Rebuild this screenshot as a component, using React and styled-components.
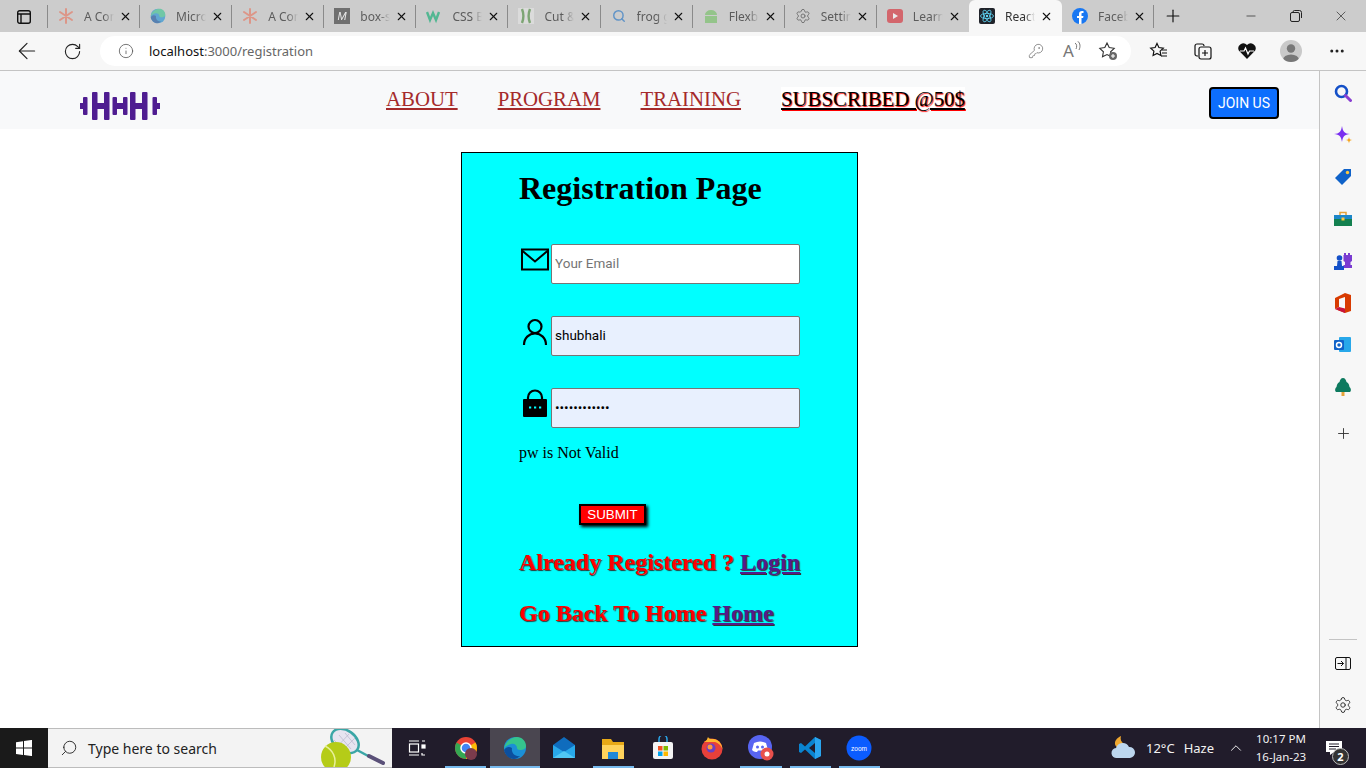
import styled, { createGlobalStyle } from "styled-components";
import { ArrowLeft, RotateCw, Info, KeyRound, Plus, X, Minus, ChevronUp, Search, Settings, MoreHorizontal } from "lucide-react";

const GlobalStyle = createGlobalStyle`
  html, body { margin: 0; padding: 0; height: 100%; overflow: hidden; }
  * { box-sizing: border-box; }
  body { font-family: "Liberation Serif", "Times New Roman", serif; }
`;

const Screen = styled.div`
  width: 1366px;
  height: 768px;
  display: flex;
  flex-direction: column;
  overflow: hidden;
  background: #fff;
`;

/* ---- browser chrome ---- */
const TabStrip = styled.div`
  height: 32px;
  background: #cccccc;
  display: flex;
  align-items: stretch;
  flex: none;
`;
const WinMenu = styled.div`
  width: 48px;
  display: flex;
  align-items: center;
  justify-content: center;
  border-right: 1px solid #8a8a8a;
  margin: 5px 0 4px;
`;
const Tab = styled.div`
  width: ${(p) => (p.$active ? "93px" : "92.1px")};
  flex: none;
  display: flex;
  align-items: center;
  padding-left: 10px;
  font-family: "Noto Sans", sans-serif;
  font-size: 12px;
  color: ${(p) => (p.$active ? "#333" : "#5c5c5c")};
  background: ${(p) => (p.$active ? "#f7f7f7" : "transparent")};
  border-radius: ${(p) => (p.$active ? "6px 6px 0 0" : "0")};
  position: relative;
  &::after {
    content: "";
    position: absolute;
    right: 0;
    top: 5px;
    bottom: 4px;
    width: 1px;
    background: ${(p) => (p.$plain ? "transparent" : "#8a8a8a")};
  }
`;
const FavSlot = styled.span`
  width: 16px;
  height: 16px;
  flex: none;
  margin-right: 10px;
  display: flex;
  align-items: center;
  justify-content: center;
  opacity: ${(p) => (p.$bright ? 1 : 0.6)};
`;
const TabLabel = styled.span`
  width: 30px;
  flex: none;
  overflow: hidden;
  white-space: nowrap;
  -webkit-mask-image: linear-gradient(90deg, #000 65%, transparent);
  mask-image: linear-gradient(90deg, #000 65%, transparent);
`;
const TabClose = styled.span`
  margin-left: 5px;
  display: flex;
  color: #111;
`;
const NewTab = styled.div`
  width: 38px;
  display: flex;
  align-items: center;
  justify-content: center;
`;
const WinControls = styled.div`
  margin-left: auto;
  margin-right: 3px;
  display: flex;
`;
const WinButton = styled.div`
  width: 45px;
  display: flex;
  align-items: center;
  justify-content: center;
  color: #222;
`;

const ToolBar = styled.div`
  height: 39px;
  background: #f7f7f7;
  border-bottom: 1px solid #c4c4c4;
  display: flex;
  align-items: center;
  flex: none;
  padding-left: 5px;
`;
const ToolButton = styled.div`
  width: ${(p) => p.$w || 44}px;
  height: 30px;
  flex: none;
  display: flex;
  align-items: center;
  justify-content: center;
  color: ${(p) => p.$color || "#222"};
`;
const AddressBar = styled.div`
  width: 1031px;
  height: 30px;
  margin: 0 6px 0 5px;
  border-radius: 15px;
  background: #fff;
  display: flex;
  align-items: center;
  padding-left: 18px;
  padding-right: 5px;
`;
const Url = styled.div`
  margin-left: 15px;
  font-family: "Noto Sans", sans-serif;
  font-size: 13px;
  color: #111;
  span { color: #666; }
`;
const PillRight = styled.div`
  margin-left: auto;
  display: flex;
`;
const ReadAloud = styled.span`
  font-family: "Noto Sans", sans-serif;
  font-size: 17px;
  line-height: 20px;
  color: #777;
  display: flex;
  align-items: flex-start;
`;
const Avatar = styled.div`
  width: 22px;
  height: 22px;
  border-radius: 50%;
  background: #c9c9c9;
  overflow: hidden;
  display: flex;
`;

/* ---- page ---- */
const Body = styled.div`
  flex: 1;
  min-height: 0;
  display: flex;
`;
const Page = styled.div`
  flex: 1;
  min-width: 0;
  background: #fff;
`;
const NavBar = styled.nav`
  height: 58px;
  background: #f8f9fa;
  display: flex;
  align-items: flex-start;
  padding-left: 80px;
  padding-right: 40px;
`;
const Logo = styled.svg`
  width: 80px;
  height: 28px;
  margin-top: 21px;
  flex: none;
`;
const NavLinks = styled.div`
  display: flex;
  gap: 40px;
  margin-left: 226px;
  margin-top: 16px;
`;
const NavLink = styled.a`
  font-size: 20.8px;
  line-height: 24px;
  color: #a52a2a;
  text-decoration: underline;
`;
const SubscribedLink = styled(NavLink)`
  color: #000;
  background: #fff;
  text-shadow: 1px 1px 1px #f00;
`;
const JoinButton = styled.button`
  margin-left: auto;
  margin-top: 16px;
  width: 70px;
  height: 32px;
  padding: 0;
  background: #0d6efd;
  border: 2px solid #000;
  border-radius: 4px;
  color: #fff;
  font-family: Roboto, "Liberation Sans", sans-serif;
  font-size: 14px;
`;

const Card = styled.div`
  width: 397px;
  height: 495px;
  margin: 23px auto 0;
  border: 1px solid #000;
  background: #00ffff;
  padding: 16px 0 0 57px;
`;
const Title = styled.h1`
  margin: 0 0 37px;
  font-size: 32px;
  line-height: 38px;
  font-weight: 700;
  color: #000;
`;
const Field = styled.div`
  display: flex;
  align-items: flex-start;
  height: 40px;
  margin-bottom: 32px;
`;
const FieldIcon = styled.svg`
  width: 32px;
  height: 32px;
  flex: none;
`;
const TextInput = styled.input`
  width: 249px;
  height: 40px;
  padding: 0 3px 2px;
  border: 1px solid #767676;
  border-radius: 2px;
  background: ${(p) => (p.$filled ? "#e8f0fe" : "#fff")};
  color: #000;
  font-family: Roboto, "Liberation Sans", sans-serif;
  font-size: 13.5px;
  outline: none;
  &::placeholder { color: #757575; opacity: 1; }
`;
const ErrorText = styled.p`
  margin: -16px 0 0;
  font-size: 16px;
  line-height: 18px;
  color: #000;
`;
const SubmitButton = styled.button`
  display: block;
  margin: 42px 0 0 60px;
  width: 67px;
  height: 21px;
  padding: 0;
  border: 2px solid #000;
  background: #f00;
  color: #fff;
  font-family: "Liberation Sans", Arial, sans-serif;
  font-size: 13.33px;
  line-height: 16px;
  box-shadow: 2px 2px 3px #000;
`;
const Prompt = styled.h3`
  margin: 23px 0 0;
  font-size: 24px;
  line-height: 28px;
  font-weight: 700;
  color: #f00;
  text-shadow: 1px 1px 1px #333;
  white-space: nowrap;
  a { color: #551a8b; text-decoration: underline; }
`;

/* ---- edge sidebar ---- */
const SideBar = styled.aside`
  width: 47px;
  flex: none;
  background: #f7f7f7;
  border-left: 1px solid #c4c4c4;
  display: flex;
  flex-direction: column;
  align-items: center;
  padding-top: 1px;
`;
const SideItem = styled.div`
  height: 42px;
  width: 100%;
  flex: none;
  display: flex;
  align-items: center;
  justify-content: center;
  color: #333;
`;
const SideAdd = styled(SideItem)`
  margin-top: 4px;
`;
const SideFoot = styled.div`
  margin-top: auto;
  width: 100%;
  display: flex;
  flex-direction: column;
  align-items: center;
  padding-bottom: 2px;
`;
const SideRule = styled.div`
  width: 28px;
  border-top: 1px solid #c4c4c4;
  margin-bottom: 2px;
`;

/* ---- windows taskbar ---- */
const TaskBar = styled.footer`
  height: 40px;
  flex: none;
  background: #211c2b;
  display: flex;
  align-items: stretch;
  color: #fff;
`;
const StartButton = styled.div`
  width: 48px;
  background: #1a1a1a;
  display: flex;
  align-items: center;
  justify-content: center;
`;
const SearchBox = styled.div`
  width: 344px;
  background: #f3f3f3;
  border: 1px solid #bcbcbc;
  border-width: 1px 0;
  display: flex;
  align-items: center;
  padding-left: 12px;
  gap: 10px;
  color: #222;
  font-family: "Noto Sans", sans-serif;
  font-size: 14px;
`;
const MirrorSearch = styled(Search)`
  transform: scaleX(-1);
`;
const Racket = styled.svg`
  width: 66px;
  height: 38px;
  margin-left: auto;
  margin-right: 7px;
`;
const TaskIcon = styled.div`
  width: 49.2px;
  flex: none;
  display: flex;
  align-items: center;
  justify-content: center;
  background: ${(p) => (p.$current ? "#4a4650" : "transparent")};
  position: relative;
  &::after {
    content: "";
    display: ${(p) => (p.$running ? "block" : "none")};
    position: absolute;
    left: ${(p) => (p.$current ? 0 : 4)}px;
    right: ${(p) => (p.$current ? 0 : 4)}px;
    bottom: 0;
    height: 2px;
    background: #76b9ed;
  }
`;
const TaskIcons = styled.div`
  display: flex;
`;
const Tray = styled.div`
  margin-left: auto;
  display: flex;
  align-items: center;
  font-family: "Noto Sans", sans-serif;
  font-size: 13px;
  color: #f2f2f2;
`;
const Weather = styled.div`
  display: flex;
  align-items: center;
  gap: 9px;
  margin-right: 13px;
`;
const Clock = styled.div`
  width: 62px;
  margin-left: 5px;
  text-align: center;
  font-size: 11.5px;
  line-height: 18px;
`;
const Notify = styled.div`
  width: 52px;
  height: 100%;
  margin-left: 2px;
  padding-right: 12px;
  display: flex;
  align-items: center;
  justify-content: center;
  position: relative;
`;
const NotifyBadge = styled.span`
  position: absolute;
  right: 17px;
  top: 20px;
  width: 17px;
  height: 17px;
  border-radius: 50%;
  background: #333;
  border: 1px solid #bbb;
  font-size: 11px;
  font-weight: 700;
  line-height: 15px;
  text-align: center;
  color: #fff;
`;

/* ---- drawn icons ---- */
const Star8 = () => (
  <svg width="16" height="16" viewBox="0 0 16 16" stroke="#e8735c" strokeWidth="2" strokeLinecap="round">
    <path d="M8 1v14M2 4l12 8M14 4L2 12" />
  </svg>
);
const EdgeIcon = ({ size = 16 }) => (
  <svg width={size} height={size} viewBox="0 0 24 24">
    <circle cx="12" cy="12" r="11" fill="#1b8fd6" />
    <path d="M1 13C2 5 9 1 14 1c5 0 9 4 9 9 0 3-3 4-6 4-2 0-3-1-3-2 0-3-3-5-6-4-4 1-6 3-7 5z" fill="#35c48d" />
    <path d="M9 12c-1 5 3 9 8 8-2 2-4 3-6 3-5 0-9-4-10-9 2-3 5-4 8-2z" fill="#0c4f9e" />
  </svg>
);
const MIcon = () => (
  <svg width="16" height="16" viewBox="0 0 16 16">
    <rect width="16" height="16" fill="#333" />
    <text x="8" y="12" textAnchor="middle" fontSize="11" fontStyle="italic" fontFamily="Liberation Sans" fill="#fff">M</text>
  </svg>
);
const W3Icon = () => (
  <svg width="16" height="16" viewBox="0 0 16 16" fill="none" stroke="#04aa6d" strokeWidth="2.4">
    <path d="M1 4l3 8 3-7 3 7 3-8" />
  </svg>
);
const CutIcon = () => (
  <svg width="16" height="16" viewBox="0 0 16 16" fill="none" stroke="#4a8c3a" strokeWidth="2.4">
    <rect width="16" height="16" fill="#e6e6e6" stroke="none" />
    <path d="M4 15C6 10 6 6 4 1M12 15C10 10 10 6 12 1" />
  </svg>
);
const AndroidIcon = () => (
  <svg width="16" height="16" viewBox="0 0 16 16" fill="#6fbf5f">
    <path d="M2 7a6 5 0 0 1 12 0zM2 8h12v7H2z" />
  </svg>
);
const YtIcon = () => (
  <svg width="16" height="16" viewBox="0 0 16 16">
    <rect y="1" width="16" height="14" rx="3" fill="#d9232e" />
    <path d="M6 5l5 3-5 3z" fill="#fff" />
  </svg>
);
const ReactIcon = () => (
  <svg width="16" height="16" viewBox="0 0 16 16" fill="none" stroke="#61dafb" strokeWidth=".8">
    <rect width="16" height="16" rx="2" fill="#20232a" stroke="none" />
    <ellipse cx="8" cy="8" rx="6.5" ry="2.6" />
    <ellipse cx="8" cy="8" rx="6.5" ry="2.6" transform="rotate(60 8 8)" />
    <ellipse cx="8" cy="8" rx="6.5" ry="2.6" transform="rotate(120 8 8)" />
    <circle cx="8" cy="8" r="1.2" fill="#61dafb" stroke="none" />
  </svg>
);
const FbIcon = () => (
  <svg width="16" height="16" viewBox="0 0 16 16">
    <circle cx="8" cy="8" r="8" fill="#1877f2" />
    <path d="M7 16V10H5V8h2V6c0-2 1-3 3-3h1.500v2H10.500C9.500 5 9.500 5.500 9.500 6v2h2l-.4 2H9.500v6z" fill="#fff" />
  </svg>
);

const Dumbbell = ({ x, innerA, innerB }) => (
  <g transform={`translate(${x} 0)`}>
    <rect x="0" y="11" width="7" height="6" />
    <rect x="3" y="5" width="4.500" height="18" rx="1" />
    <rect x={innerA} y="0" width="5.500" height="28" rx="1" />
    <rect x={innerA} y="11" width={innerB - innerA} height="6" />
    <rect x={innerB} y="0" width="5.500" height="28" rx="1" />
    <rect x="32.500" y="5" width="4.500" height="18" rx="1" />
    <rect x="33" y="11" width="7" height="6" />
  </g>
);

const tabs = [
  { label: "A Complete Guide", icon: <Star8 /> },
  { label: "Microsoft", icon: <EdgeIcon /> },
  { label: "A Complete Guide", icon: <Star8 /> },
  { label: "box-sizing", icon: <MIcon /> },
  { label: "CSS Box", icon: <W3Icon /> },
  { label: "Cut & Paste", icon: <CutIcon /> },
  { label: "frog game", icon: <Search size={14} color="#1a6fc4" strokeWidth={2.5} /> },
  { label: "Flexbox", icon: <AndroidIcon /> },
  { label: "Settings", icon: <Settings size={16} color="#333" strokeWidth={1.4} /> },
  { label: "Learn", icon: <YtIcon />, plain: true },
  { label: "React App", icon: <ReactIcon />, active: true, bright: true, plain: true },
  { label: "Facebook", icon: <FbIcon />, bright: true },
];

const sideIcons = [
  <svg key="s" width="18" height="18" viewBox="0 0 18 18" fill="none"><circle cx="7.500" cy="7.500" r="5.500" stroke="#1450c8" strokeWidth="2.600" /><path d="M11.500 11.500L16.500 16.500" stroke="#8a3fd1" strokeWidth="3" strokeLinecap="round" /></svg>,
  <svg key="c" width="19" height="19" viewBox="0 0 19 19"><path d="M8 0c1 6 2.500 7.500 8 8-5.500.8-7 2-8 8-1-6-2.500-7.200-8-8 5.500-.5 7-2 8-8z" fill="#7a2ff0" /><path d="M15 11c.3 2 .9 2.700 3.500 3-2.600.3-3.200 1-3.500 3.500-.3-2.500-.9-3.200-3.500-3.500 2.600-.3 3.200-1 3.500-3z" fill="#f5a623" /></svg>,
  <svg key="t" width="18" height="18" viewBox="0 0 18 18"><path d="M1 10l9-9h7v7l-9 9z" fill="#0f62c9" /><circle cx="13.500" cy="4.500" r="1.700" fill="#ffc83d" /></svg>,
  <svg key="b" width="18" height="18" viewBox="0 0 18 18"><path d="M6 5V2.500h6V5" fill="none" stroke="#e5a33a" strokeWidth="1.500" /><rect y="5" width="18" height="4" fill="#1c86c9" /><rect y="9" width="18" height="7" fill="#13804f" /><rect x="7.500" y="7.500" width="3" height="3" fill="#ffc83d" /></svg>,
  <svg key="g" width="18" height="18" viewBox="0 0 18 18"><path d="M10 1h2v2h2V1h2v2h2v6l-1.500 1V13H18v3H9.500v-3H11v-3L9.500 9V3H10z" fill="#7a3bd1" /><circle cx="5.500" cy="6" r="2.800" fill="#1450c8" /><path d="M3.500 9h4L8 14h2v4H0v-4h3z" fill="#1450c8" /></svg>,
  <svg key="o" width="18" height="20" viewBox="0 0 18 20"><path d="M1 5l10-5 6 2v16l-6 2-10-4 10 1.500V4L5 6v8l-4 2z" fill="#d83b01" /><path d="M1 16l4-2 6 1.500V20z" fill="#c8143c" /></svg>,
  <svg key="l" width="18" height="18" viewBox="0 0 18 18"><rect x="5" y="1" width="12" height="15" rx="1" fill="#28a8ea" /><rect x="0" y="4" width="10" height="10" rx="1" fill="#0f62c9" /><circle cx="5" cy="9" r="2.500" fill="none" stroke="#fff" strokeWidth="1.500" /></svg>,
  <svg key="r" width="18" height="18" viewBox="0 0 18 18"><path d="M9 0c2 0 3 2 3.500 4C15 5 15 7 15.500 9c1.500 1 2 4 .5 5H2c-1.500-1-1-4 .5-5C3 7 3 5 5.500 4 6 2 7 0 9 0z" fill="#0d7a5f" /><rect x="7.500" y="14" width="3" height="4" fill="#e5a33a" /></svg>,
];

const taskIcons = [
  {
    running: true,
    icon: (
      <svg width="24" height="24" viewBox="0 0 24 24">
        <circle cx="12" cy="12" r="11" fill="#ea4335" />
        <path d="M12 12L21.500 6.500A11 11 0 0 1 12 23z" fill="#fbbc05" />
        <path d="M12 12L12 23A11 11 0 0 1 2.500 6.500z" fill="#34a853" />
        <circle cx="12" cy="12" r="5" fill="#4285f4" stroke="#fff" strokeWidth="1.500" />
        <circle cx="17" cy="18" r="6" fill="#7b3b4c" />
      </svg>
    ),
  },
  { running: true, current: true, icon: <EdgeIcon size={24} /> },
  {
    icon: (
      <svg width="24" height="24" viewBox="0 0 24 24">
        <path d="M1 9l11-8 11 8v13H1z" fill="#0f6cbd" />
        <path d="M1 9l11 7 11-7v13H1z" fill="#28a8ea" />
        <path d="M1 22l11-7 11 7z" fill="#50c8f5" />
      </svg>
    ),
  },
  {
    running: true,
    icon: (
      <svg width="24" height="24" viewBox="0 0 24 24">
        <path d="M1 3h9l2 3h11v17H1z" fill="#e8a917" />
        <rect x="1" y="9" width="22" height="14" fill="#ffd35c" />
        <rect x="7" y="16" width="10" height="7" fill="#1f88d8" />
      </svg>
    ),
  },
  {
    icon: (
      <svg width="24" height="24" viewBox="0 0 24 24">
        <path d="M8 6V3a4 4 0 0 1 8 0v3" fill="none" stroke="#2aa5e8" strokeWidth="1.500" />
        <rect x="2" y="6" width="20" height="17" rx="2" fill="#f4f4f4" />
        <rect x="7" y="10" width="4.500" height="4.500" fill="#f25022" />
        <rect x="12.500" y="10" width="4.500" height="4.500" fill="#7fba00" />
        <rect x="7" y="15.500" width="4.500" height="4.500" fill="#00a4ef" />
        <rect x="12.500" y="15.500" width="4.500" height="4.500" fill="#ffb900" />
      </svg>
    ),
  },
  {
    icon: (
      <svg width="24" height="24" viewBox="0 0 24 24">
        <circle cx="12" cy="13" r="10.500" fill="#e8403a" />
        <path d="M4 6c3-1 3-3 4-5 1 2 3 2 6 2 5 1 8 5 8.500 10C20 8 17 6 14 6z" fill="#ffb52e" />
        <circle cx="11" cy="12" r="4.500" fill="#6b3fc4" />
        <circle cx="10" cy="11" r="2.500" fill="#ff9a3c" />
      </svg>
    ),
  },
  {
    running: true,
    icon: (
      <svg width="26" height="26" viewBox="0 0 26 26">
        <circle cx="12" cy="12" r="12" fill="#5865f2" />
        <path d="M6 8c4-2 8-2 12 0l2 7c-2 2-4 2-5 2l-1-1.500h-4L9 17c-1 0-3 0-5-2z" fill="#fff" />
        <circle cx="9.500" cy="12" r="1.500" fill="#5865f2" />
        <circle cx="14.500" cy="12" r="1.500" fill="#5865f2" />
        <circle cx="19" cy="19" r="6.500" fill="#e8504c" />
        <circle cx="19" cy="19" r="2.500" fill="#fff" />
      </svg>
    ),
  },
  {
    running: true,
    icon: (
      <svg width="24" height="24" viewBox="0 0 24 24">
        <path d="M17 1l6 3v16l-6 3L7 13.500 3 17l-2-1V8l2-1 4 3.500z" fill="#0a84d0" />
        <path d="M17 1l6 3v16l-6 3z" fill="#2aa5ef" />
        <path d="M17 7l-6 5 6 5z" fill="#211c2b" />
      </svg>
    ),
  },
  {
    running: true,
    icon: (
      <svg width="26" height="26" viewBox="0 0 26 26">
        <circle cx="13" cy="13" r="12.500" fill="#0b5cff" />
        <text x="13" y="15.500" textAnchor="middle" fontFamily="Liberation Sans" fontSize="6.500" fill="#fff">zoom</text>
      </svg>
    ),
  },
];

export default function App() {
  return (
    <Screen>
      <GlobalStyle />
      <TabStrip>
        <WinMenu>
          <svg width="16" height="16" viewBox="0 0 16 16" fill="none" stroke="#111" strokeWidth="1.400">
            <rect x="1.700" y="1.700" width="12.600" height="12.600" rx="2" />
            <path d="M1.700 5h12.600M5 5v9" />
          </svg>
        </WinMenu>
        {tabs.map((t, i) => (
          <Tab key={i} $active={t.active} $plain={t.plain}>
            <FavSlot $bright={t.bright}>{t.icon}</FavSlot>
            <TabLabel>{t.label}</TabLabel>
            <TabClose><X size={13} strokeWidth={2} /></TabClose>
          </Tab>
        ))}
        <NewTab><Plus size={20} strokeWidth={1.4} color="#111" /></NewTab>
        <WinControls>
          <WinButton><Minus size={14} strokeWidth={1.2} /></WinButton>
          <WinButton>
            <svg width="12" height="12" viewBox="0 0 12 12" fill="none" stroke="#222">
              <rect x=".5" y="2.500" width="9" height="9" rx="1.500" />
              <path d="M3 2.500V2A1.500 1.500 0 0 1 4.500.5H9.500A2 2 0 0 1 11.500 2.500V8" />
            </svg>
          </WinButton>
          <WinButton><X size={16} strokeWidth={1} /></WinButton>
        </WinControls>
      </TabStrip>

      <ToolBar>
        <ToolButton><ArrowLeft size={26} strokeWidth={1.1} /></ToolButton>
        <ToolButton $w={46}><RotateCw size={19} strokeWidth={1.4} /></ToolButton>
        <AddressBar>
          <Info size={16} strokeWidth={1.2} color="#555" />
          <Url>localhost<span>:3000/registration</span></Url>
          <PillRight>
            <ToolButton $w={36} $color="#777"><KeyRound size={16} strokeWidth={1.2} /></ToolButton>
            <ToolButton $w={36}>
              <ReadAloud>A<svg width="7" height="12" viewBox="0 0 7 12" fill="none" stroke="#777"><path d="M1 2c2 1 2 4 1 6M3.500 0c3 2 3 6 1.500 9" /></svg></ReadAloud>
            </ToolButton>
            <ToolButton $w={36}>
              <svg width="20" height="20" viewBox="0 0 20 20" fill="none" stroke="#333" strokeWidth="1.100">
                <path d="M9 2l2.200 4.600 5 .7-3.600 3.500.8 5L9 13.500 4.500 15.800l.9-5L1.800 7.300l5-.7z" />
                <circle cx="15" cy="15" r="4" fill="#666" stroke="none" />
                <path d="M15 13v4M13 15h4" stroke="#fff" />
              </svg>
            </ToolButton>
          </PillRight>
        </AddressBar>
        <ToolButton>
          <svg width="20" height="20" viewBox="0 0 20 20" fill="none" stroke="#111" strokeWidth="1.200">
            <path d="M8 2.500l1.900 4 4.400.6-3.200 3 .8 4.400L8 12.400l-3.900 2.100.8-4.400-3.200-3 4.400-.6z" />
            <path d="M13 9h5M13 12h5M12 15h6" />
          </svg>
        </ToolButton>
        <ToolButton>
          <svg width="20" height="20" viewBox="0 0 20 20" fill="none" stroke="#111" strokeWidth="1.200">
            <path d="M5 15H4a2 2 0 0 1-2-2V5a2 2 0 0 1 2-2h5a2 2 0 0 1 2 2" />
            <rect x="6" y="6" width="12" height="12" rx="2" fill="#f7f7f7" />
            <path d="M12 9v6M9 12h6" />
          </svg>
        </ToolButton>
        <ToolButton>
          <svg width="20" height="18" viewBox="0 0 20 18">
            <path d="M10 17L1.800 8.500A5 5 0 0 1 10 3a5 5 0 0 1 8.200 5.500z" fill="#111" />
            <path d="M3 9h4l1.500-3 2.500 6 1.500-3h4.500" fill="none" stroke="#fff" strokeWidth="1.200" />
          </svg>
        </ToolButton>
        <ToolButton>
          <Avatar>
            <svg width="22" height="22" viewBox="0 0 22 22" fill="#777">
              <circle cx="11" cy="8.500" r="4.200" />
              <ellipse cx="11" cy="20" rx="8" ry="5.500" />
            </svg>
          </Avatar>
        </ToolButton>
        <ToolButton $w={48}><MoreHorizontal size={18} strokeWidth={2} /></ToolButton>
      </ToolBar>

      <Body>
        <Page>
          <NavBar>
            <Logo viewBox="0 0 80 28" fill="#4f1d91">
              <Dumbbell x={0} innerA={12} innerB={24} />
              <Dumbbell x={40} innerA={10} innerB={22} />
            </Logo>
            <NavLinks>
              <NavLink>ABOUT</NavLink>
              <NavLink>PROGRAM</NavLink>
              <NavLink>TRAINING</NavLink>
              <SubscribedLink>SUBSCRIBED @50$</SubscribedLink>
            </NavLinks>
            <JoinButton>JOIN US</JoinButton>
          </NavBar>

          <Card>
            <Title>Registration Page</Title>
            <Field>
              <FieldIcon viewBox="0 0 32 32" fill="none" stroke="#000" strokeWidth="2">
                <rect x="3" y="5.500" width="26" height="20" />
                <path d="M3 6.500l13 11 13-11" />
              </FieldIcon>
              <TextInput placeholder="Your Email" readOnly />
            </Field>
            <Field>
              <FieldIcon viewBox="0 0 32 32" fill="none" stroke="#000" strokeWidth="2.200">
                <circle cx="16" cy="10.500" r="6.500" />
                <path d="M5 29c0-7 5-11.500 11-11.500S27 22 27 29" />
              </FieldIcon>
              <TextInput $filled defaultValue="shubhali" readOnly />
            </Field>
            <Field>
              <FieldIcon viewBox="0 0 32 32">
                <path d="M9 12V9.500a7 7 0 0 1 14 0V12" fill="none" stroke="#000" strokeWidth="2.200" />
                <rect x="4" y="11" width="24" height="18" rx="1" fill="#000" />
                <path d="M10 19.500h2.200M15 19.500h2.200M20 19.500h2.200" stroke="#00ffff" strokeWidth="2" />
              </FieldIcon>
              <TextInput $filled type="password" defaultValue="shubhali1234" readOnly />
            </Field>
            <ErrorText>pw is Not Valid</ErrorText>
            <SubmitButton>SUBMIT</SubmitButton>
            <Prompt>Already Registered ? <a>Login</a></Prompt>
            <Prompt>Go Back To Home <a>Home</a></Prompt>
          </Card>
        </Page>

        <SideBar>
          {sideIcons.map((icon) => (
            <SideItem key={icon.key}>{icon}</SideItem>
          ))}
          <SideAdd><Plus size={17} strokeWidth={1.3} /></SideAdd>
          <SideFoot>
            <SideRule />
            <SideItem>
              <svg width="16" height="13" viewBox="0 0 16 13" fill="none" stroke="#111">
                <rect x=".5" y=".5" width="15" height="12" rx="1.500" />
                <path d="M11 .5v12M2.500 6.500h6M6 4l2.500 2.500L6 9" />
              </svg>
            </SideItem>
            <SideItem><Settings size={18} strokeWidth={1.3} /></SideItem>
          </SideFoot>
        </SideBar>
      </Body>

      <TaskBar>
        <StartButton>
          <svg width="16" height="16" viewBox="0 0 16 16" fill="#fff">
            <path d="M0 2.200l7-1v6.400H0zM8 1l8-1.100v7.700H8zM0 8.500h7v6.400l-7-1zM8 8.500h8v7.600L8 15z" />
          </svg>
        </StartButton>
        <SearchBox>
          <MirrorSearch size={18} strokeWidth={1.2} />
          Type here to search
          <Racket viewBox="0 0 66 38">
            <path d="M38 21l13 7" stroke="#3aa6a6" strokeWidth="2.500" />
            <path d="M50 27l14 7" stroke="#5a5078" strokeWidth="4" strokeLinecap="round" />
            <ellipse cx="26" cy="12" rx="15" ry="10.500" transform="rotate(35 26 12)" fill="#e6e4f0" stroke="#3aa6a6" strokeWidth="2.500" />
            <path d="M20 6l12 14M26 4l10 12M15 11l10 10M30 5L17 19M36 9L23 22" stroke="#b9b6cc" strokeWidth=".7" />
            <circle cx="17" cy="28" r="15" fill="#b5cc18" />
            <path d="M6 17c8 4 12 12 9 21" fill="none" stroke="#e8f09a" strokeWidth="1.500" />
          </Racket>
        </SearchBox>
        <TaskIcon>
          <svg width="18" height="18" viewBox="0 0 18 18" fill="none" stroke="#fff" strokeWidth="1.200">
            <path d="M1 2h10M1 16h10" />
            <rect x="1.500" y="5" width="9" height="8" />
            <path d="M14 2h3M14 14v2h3" />
            <rect x="14" y="6" width="3" height="3" fill="#fff" />
          </svg>
        </TaskIcon>
        <TaskIcons>
          {taskIcons.map((t, i) => (
            <TaskIcon key={i} $running={t.running} $current={t.current}>{t.icon}</TaskIcon>
          ))}
        </TaskIcons>
        <Tray>
          <Weather>
            <svg width="26" height="26" viewBox="0 0 26 26">
              <path d="M10 1c-1 3 0 6 3 8l-6 4c-3-2-4-5-2-8 1-2 3-3 5-4z" fill="#f0a830" />
              <path d="M6 23a5 5 0 0 1-1-10 7 7 0 0 1 13-1 5.500 5.500 0 0 1 1 11z" fill="#bcd6ee" />
            </svg>
            <span>12°C</span>
            <span>Haze</span>
          </Weather>
          <ChevronUp size={18} strokeWidth={1.3} />
          <Clock>10:17 PM<br />16-Jan-23</Clock>
          <Notify>
            <svg width="16" height="16" viewBox="0 0 16 16" fill="#fff">
              <path d="M0 1h16v11H8l-4 3v-3H0z" />
              <path d="M3 4h10M3 6.500h10M3 9h7" stroke="#211c2b" />
            </svg>
            <NotifyBadge>2</NotifyBadge>
          </Notify>
        </Tray>
      </TaskBar>
    </Screen>
  );
}
